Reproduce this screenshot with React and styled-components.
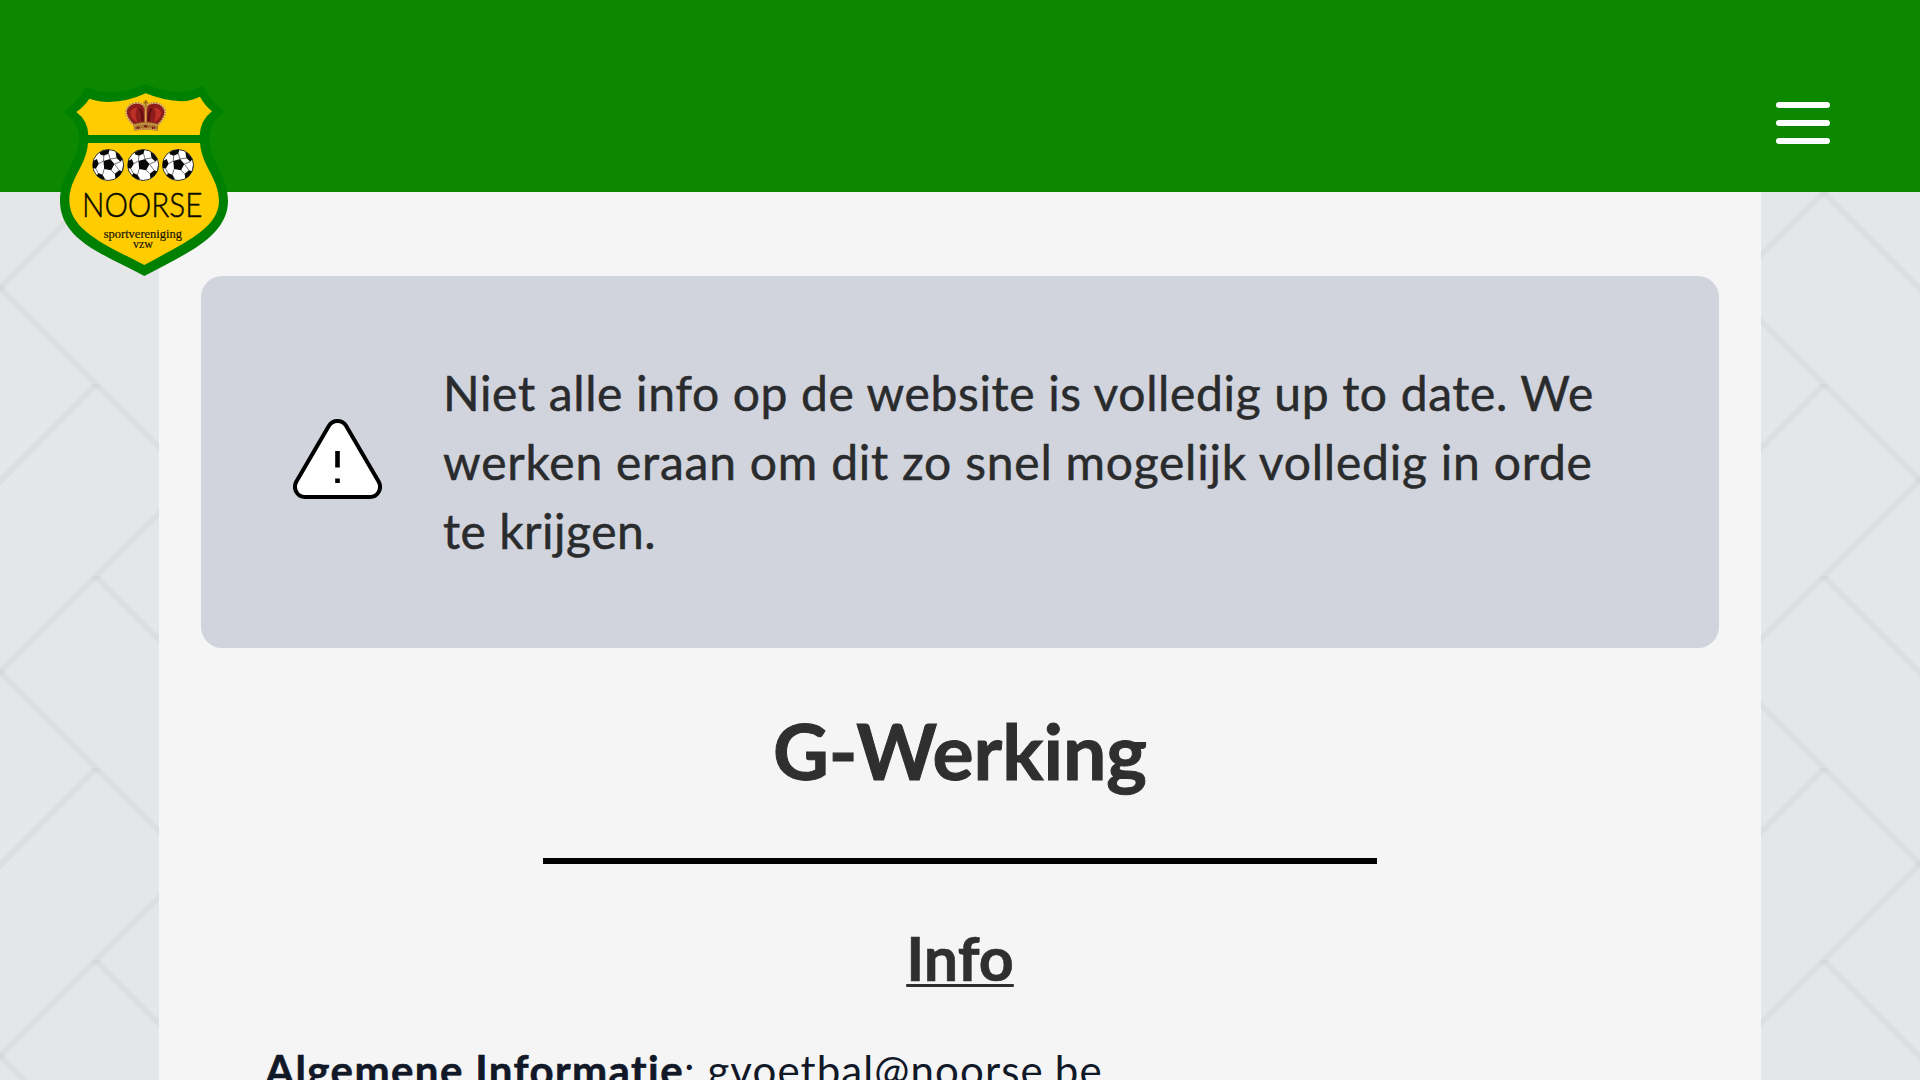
import React from "react";
import styled, { createGlobalStyle } from "styled-components";

const patternTile = encodeURIComponent(
  `<svg xmlns="http://www.w3.org/2000/svg" width="192" height="384" viewBox="0 0 192 384"><g fill="#000" fill-opacity="0.034"><path d="M0-99.7L192 92V100L0-91.7z"/><path d="M0 284.3L100.5 384h-8L0 292.3z"/><path d="M192 92.3V100.3L0 292V284z"/><path d="M92.4 0h8.3L0 101.5V93.5z"/><path d="M91.2 192h8.3L192 285V293z"/></g></svg>`
);

const GlobalStyle = createGlobalStyle`
  *, *::before, *::after { box-sizing: border-box; }
  html, body { margin: 0; padding: 0; }
  body { font-family: Lato, "Open Sans", sans-serif; color: #2f2f2f; }
  h1, h2, p { margin: 0; }
`;

const Page = styled.div`
  display: flex;
  flex-direction: column;
  height: 1080px;
  overflow: hidden;
  background: #e4e6e8 url("data:image/svg+xml,${patternTile}") 0 0 / 192px 384px;
`;

const Header = styled.header`
  display: flex;
  flex: none;
  justify-content: space-between;
  align-items: flex-start;
  height: 192px;
  padding: 84px 90px 0 60px;
  background: #0b8800;
  z-index: 1;
`;

const LogoLink = styled.a`
  display: block;
  flex: none;
  height: 192px;
  svg { display: block; }
`;

const MenuButton = styled.button`
  display: flex;
  flex-direction: column;
  gap: 12px;
  margin: 18px 0 0;
  padding: 0;
  border: 0;
  background: none;
`;

const MenuBar = styled.span`
  width: 54px;
  height: 6px;
  border-radius: 3px;
  background: #fff;
`;

const Main = styled.main`
  display: flex;
  flex-direction: column;
  align-items: center;
  flex: 1;
  width: 1602px;
  min-height: 0;
  margin: 0 auto;
  padding: 84px 42px 0;
  background: #f5f5f5;
`;

const Alert = styled.section`
  display: flex;
  flex: none;
  align-items: center;
  gap: 61px;
  width: 100%;
  height: 372px;
  padding: 0 92px;
  border-radius: 21px;
  background: #d1d4dc;
  svg { display: block; flex: none; margin-top: -7px; }
`;

const AlertText = styled.p`
  margin-top: -2px;
  font-size: 48px;
  line-height: 69px;
  color: #2a2b2d;
  -webkit-text-stroke: 0.5px #2a2b2d;
`;

const Line = styled.span`
  display: block;
  white-space: nowrap;
  letter-spacing: ${(p) => p.$tracking}px;
`;

const Title = styled.h1`
  margin-top: 57px;
  font-size: 77px;
  font-weight: 700;
  line-height: 90px;
  -webkit-text-stroke: 1px #2f2f2f;
`;

const Divider = styled.hr`
  flex: none;
  width: 834px;
  height: 6px;
  margin: 63px 0 0;
  border: 0;
  background: #000;
`;

const Subtitle = styled.h2`
  margin-top: 58px;
  font-size: 61px;
  font-weight: 700;
  line-height: 72px;
  text-decoration: underline;
  text-decoration-thickness: 3px;
  text-underline-offset: 3px;
  text-decoration-skip-ink: none;
  -webkit-text-stroke: 0.6px #2f2f2f;
`;

const Paragraph = styled.p`
  flex: none;
  align-self: stretch;
  margin-top: 46px;
  padding-left: 64px;
  font-size: 42px;
  line-height: 60px;
  white-space: nowrap;
  color: #111827;
`;

const Strong = styled.strong`
  letter-spacing: ${(p) => p.$tracking}px;
  -webkit-text-stroke: 0.6px #111827;
`;

const Contact = styled.span`
  letter-spacing: ${(p) => p.$tracking}px;
`;

function Ball({ x }) {
  return (
    <g transform={`translate(${x} 285)`}>
      <circle r="46.5" fill="#fff" stroke="#111" strokeWidth="2.5" />
      <g fill="#080808">
        <path d="M-14-12L6-18 19-3 9 16-12 12z" />
        <path d="M-24-39Q-10-47 4-46L1-34-13-28-25-32z" />
        <path d="M22-40Q37-31 43-17L37-10 25-21z" />
        <path d="M-45-12L-34-18-28-4-37 11-46 8z" />
        <path d="M-30 24L-17 29-9 43Q-24 43-34 32z" />
        <path d="M20 26L33 16 42 19Q36 34 22 41z" />
      </g>
      <g stroke="#333" strokeWidth="2" fill="none">
        <path d="M-14-12L-28-4M-14-12L-13-28M6-18L1-34M6-18L25-21M19-3L37-10M19-3L33 16M9 16L20 26M-12 12L-17 29M-37 11L-30 24M42 19L46 2" />
      </g>
    </g>
  );
}

function Crown() {
  return (
    <g>
      <path d="M284 168Q258 146 258 124Q262 104 284 99Q306 96 316 112Q328 96 350 99Q374 106 376 126Q374 148 350 168Q316 160 284 168z" fill="#8f1d1c" />
      <path d="M270 128q8-18 22-14q-10 18 0 42q-18-8-22-28zM364 128q-8-18-22-14q10 18 0 42q18-8 22-28z" fill="#bd3028" />
      <path d="M300 116q8 12 8 38M334 116q-8 12-8 38" stroke="#5f0f13" strokeWidth="7" fill="none" />
      <path d="M284 168Q258 146 258 124Q262 104 284 99Q306 96 316 112Q328 96 350 99Q374 106 376 126Q374 148 350 168" fill="none" stroke="#c08a3c" strokeWidth="5" />
      <path d="M284 168Q258 146 258 124Q262 104 284 99Q306 96 316 112Q328 96 350 99Q374 106 376 126Q374 148 350 168" fill="none" stroke="#f3d9a6" strokeWidth="4" strokeDasharray="3 5" />
      <path d="M317 112V158" stroke="#d9a94c" strokeWidth="6" />
      <path d="M317 90V110M310 98H324" stroke="#9b6a22" strokeWidth="5" />
      <circle cx="317" cy="112" r="6" fill="#b8863a" />
      <path d="M281 162Q317 150 355 162L353 183Q317 176 282 183z" fill="#a8752c" />
      <path d="M283 167Q317 156 353 167M283 180Q317 173 352 180" fill="none" stroke="#efd08a" strokeWidth="3" strokeDasharray="4 3" />
      <path d="M290 173h8M312 169h10M336 173h8" stroke="#7d1a1a" strokeWidth="6" />
    </g>
  );
}

function ClubLogo() {
  return (
    <svg width="168" height="192" viewBox="60 42 504 576" role="img" aria-label="Noorse">
      <path
        fill="#008000"
        d="M316 42Q265 66 210 67Q170 66 138 50Q112 98 72 125Q118 160 118 205C118 270 60 315 60 392C60 510 190 552 313 618C436 552 564 500 564 392C564 315 507 270 507 205Q510 155 553 125Q514 98 488 47Q455 64 420 66Q365 64 316 42z"
      />
      <path
        fill="#fc0"
        d="M317 70Q265 95 205 96Q172 95 148 86Q132 110 109 126Q144 152 145 195H479Q482 150 516 124Q494 106 480 80Q455 92 425 94Q370 92 317 70z"
      />
      <path
        fill="#fc0"
        d="M144 219C138 292 88 322 88 393C90 480 190 522 313 585C430 520 537 475 537 393C536 322 486 292 480 219z"
      />
      <Crown />
      <Ball x={204.5} />
      <Ball x={309.5} />
      <Ball x={414} />
      <text x="126" y="440" fontFamily="Lato" fontWeight="300" fontSize="101" textLength="361" lengthAdjust="spacingAndGlyphs" fill="#0a0a00" stroke="#0a0a00" strokeWidth="1.5">
        NOORSE
      </text>
      <text x="191" y="504" fontFamily="Liberation Serif" fontSize="36" textLength="235" lengthAdjust="spacingAndGlyphs" fill="#1a1400" stroke="#1a1400" strokeWidth="0.6">
        sportvereniging
      </text>
      <text x="279" y="533" fontFamily="Liberation Serif" fontSize="36" textLength="60" lengthAdjust="spacingAndGlyphs" fill="#1a1400" stroke="#1a1400" strokeWidth="0.6">
        vzw
      </text>
    </svg>
  );
}

function WarningIcon() {
  return (
    <svg width="89" height="80" viewBox="0 0 89 80" fill="none" stroke="#000" strokeWidth="4">
      <path
        fill="#fff"
        d="M35.8 7C39.8 .4 49.2 .4 53.2 7L85.6 62.5C89.4 69.5 85 78 77 78H12C4 78-.4 69.5 3.4 62.5z"
      />
      <path d="M44.5 32V48.5M44.5 59.5V64" strokeWidth="4.6" />
    </svg>
  );
}

export default function App() {
  return (
    <>
      <GlobalStyle />
      <Page>
        <Header>
          <LogoLink>
            <ClubLogo />
          </LogoLink>
          <MenuButton aria-label="Menu">
            <MenuBar />
            <MenuBar />
            <MenuBar />
          </MenuButton>
        </Header>
        <Main>
          <Alert>
            <WarningIcon />
            <AlertText>
              <Line $tracking={0.64}>Niet alle info op de website is volledig up to date. We</Line>
              <Line $tracking={0.77}>werken eraan om dit zo snel mogelijk volledig in orde</Line>
              <Line $tracking={0.5}>te krijgen.</Line>
            </AlertText>
          </Alert>
          <Title>G-Werking</Title>
          <Divider />
          <Subtitle>Info</Subtitle>
          <Paragraph>
            <Strong $tracking={1.4}>Algemene Informatie</Strong>
            <Contact $tracking={1.1}>: gvoetbal@noorse.be</Contact>
          </Paragraph>
        </Main>
      </Page>
    </>
  );
}
